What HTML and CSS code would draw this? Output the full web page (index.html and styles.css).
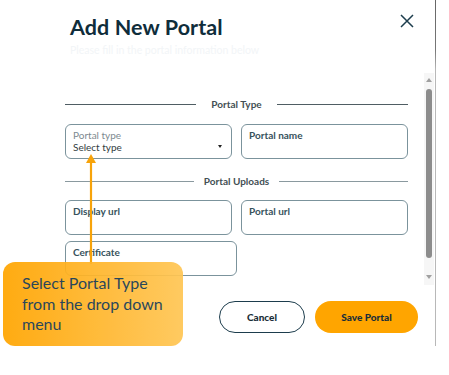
FILE: index.html
```html
<!DOCTYPE html>
<html>
<head>
<meta charset="utf-8">
<link rel="stylesheet" href="styles.css">
</head>
<body>
<div class="modal">
  <div class="panel">
    <div class="header">
      <div class="titles">
        <h1 class="title">Add New Portal</h1>
        <p class="subtitle">Please fill in the portal information below</p>
      </div>
      <svg class="close" width="14" height="14" viewBox="0 0 14 14"><path d="M1 1 L13 13 M13 1 L1 13" stroke="#1d3d4d" stroke-width="1.5" fill="none"/></svg>
    </div>
    <div class="body">
      <div class="form">
        <div class="divider dark"><span class="line"></span><span class="dtext">Portal Type</span><span class="line"></span></div>
        <div class="row first">
          <div class="field">
            <div class="label muted">Portal type</div>
            <div class="value">Select type</div>
            <span class="caret"></span>
          </div>
          <div class="field"><div class="label">Portal name</div></div>
        </div>
        <div class="divider light"><span class="line"></span><span class="dtext">Portal Uploads</span><span class="line"></span></div>
        <div class="row second">
          <div class="field"><div class="label">Display url</div></div>
          <div class="field"><div class="label">Portal url</div></div>
        </div>
        <div class="row third">
          <div class="field cert"><div class="label">Certificate</div></div>
        </div>
      </div>
      <div class="scrollbar">
        <span class="up"></span>
        <span class="thumb"></span>
        <span class="down"></span>
      </div>
    </div>
    <div class="footer">
      <button class="btn cancel">Cancel</button>
      <button class="btn save">Save Portal</button>
    </div>
  </div>
  <div class="edge"></div>
</div>
<svg class="pointer" width="14" height="110" viewBox="0 0 14 110"><path d="M7 8 V110" stroke="#f7a30a" stroke-width="2.2"/><path d="M2 9 L7 0 L12 9 Z" fill="#f7a30a"/></svg>
<div class="callout">Select Portal Type from the drop down menu</div>
</body>
</html>
```

FILE: styles.css
```css
html, body { margin: 0; padding: 0; background: #fff; }
body { font-family: "Lato", "Open Sans", sans-serif; color: #0e2d3a; }

.modal { display: flex; width: 436px; height: 346px; }
.panel { flex: 1; display: flex; flex-direction: column; }
.edge { width: 1px; background: linear-gradient(#666 0, #777 50px, #b8b8b8 70px, #b8b8b8 100%); }

.header { height: 73px; display: flex; justify-content: space-between; align-items: flex-start; padding-left: 70px; padding-right: 21px; box-sizing: border-box; }
.title { margin: 14px 0 0; font-size: 21.5px; line-height: 26px; font-weight: 700; color: #0f2d3b; letter-spacing: 0.1px; }
.subtitle { margin: 4px 0 0; font-size: 10.5px; line-height: 12px; color: #f2f5f7; }
.close { margin-top: 14px; }

.body { height: 212px; display: flex; }
.form { width: 343px; margin-left: 65px; }
.scrollbar { width: 10px; margin-left: 16px; background: #f6f6f6; display: flex; flex-direction: column; align-items: center; }
.up { margin-top: 5px; width: 0; height: 0; border-left: 3.5px solid transparent; border-right: 3.5px solid transparent; border-bottom: 4px solid #a0a0a0; }
.thumb { margin-top: 7px; width: 6px; height: 169px; border-radius: 3px; background: #8c8c8c; }
.down { margin-top: 17px; width: 0; height: 0; border-left: 3.5px solid transparent; border-right: 3.5px solid transparent; border-top: 4px solid #a0a0a0; }

.divider { display: flex; align-items: center; height: 12px; }
.divider .line { flex: 1; height: 1px; }
.divider.dark { margin-top: 25px; }
.divider.dark .line { background: #4f5d63; }
.divider.dark .dtext { padding: 0 15px; }
.divider.light { margin-top: 16px; }
.divider.light .line { background: #8a999f; }
.divider.light .dtext { padding: 0 10px; }
.dtext { font-size: 10px; font-weight: 700; color: #434f54; line-height: 12px; }

.row { display: flex; gap: 9px; }
.row.first { margin-top: 14px; }
.row.second { margin-top: 13px; }
.row.third { margin-top: 6px; }
.field { position: relative; width: 167px; height: 35px; box-sizing: border-box; border: 1px solid #7b939c; border-radius: 6px; padding: 5px 0 0 7px; }
.field.cert { width: 172px; }
.label { font-size: 10px; line-height: 11px; color: #37525c; font-weight: 700; }
.label.muted { color: #7d8a90; font-weight: 400; }
.value { font-size: 10px; line-height: 12px; color: #333d42; }
.caret { position: absolute; right: 9px; top: 20px; width: 0; height: 0; border-left: 2.5px solid transparent; border-right: 2.5px solid transparent; border-top: 3px solid #222; }

.footer { display: flex; justify-content: flex-end; gap: 10px; padding: 16px 17px 0 0; }
.btn { height: 32px; border-radius: 16px; font-family: "Lato", sans-serif; font-weight: 900; font-size: 10px; color: #1a2e38; cursor: pointer; }
.cancel { width: 86px; background: #fff; border: 1.5px solid #1d3d4d; }
.save { width: 103px; background: #ffa500; border: none; }

.pointer { position: absolute; left: 84px; top: 154px; }
.callout { position: absolute; left: 3px; top: 262px; width: 180px; height: 84px; box-sizing: border-box; border-radius: 12px; background: linear-gradient(90deg, #ffa500, #ffc655); opacity: 0.93; padding: 11px 10px 0 19px; font-family: "Lato", "Noto Sans", sans-serif; font-size: 16px; line-height: 20.5px; color: #17394f; }
```
